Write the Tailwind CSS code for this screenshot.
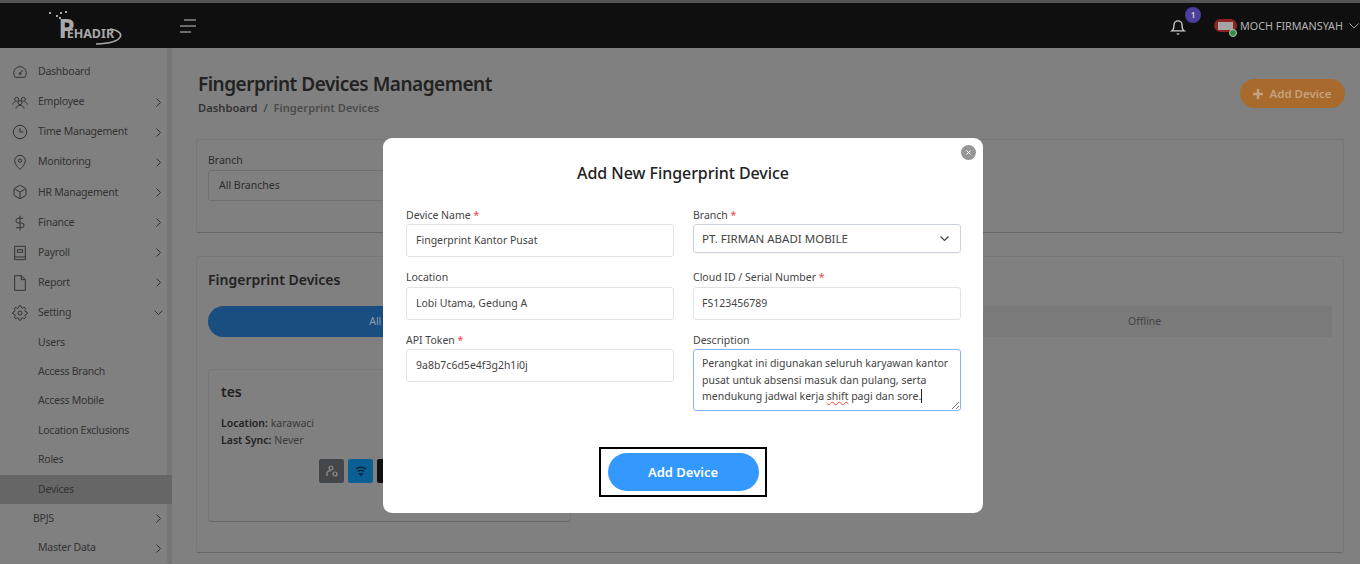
<!DOCTYPE html>
<html lang="en">
<head>
    <meta charset="UTF-8">
    <meta name="viewport" content="width=device-width, initial-scale=1.0">
    <title>Fingerprint Devices Management</title>
    <script src="https://cdn.jsdelivr.net/npm/@tailwindcss/browser@4"></script>
</head>
<body class="relative w-[1360px] h-[564px] overflow-hidden bg-[#808080] font-['Noto_Sans',sans-serif] text-[#2c2c2c]">

    <!-- top bar -->
    <header class="h-[48px] border-t-[3px] border-[#555555] bg-[#0f0f0f] flex items-center">
        <div class="w-[180px] shrink-0 pl-[48px]">
            <svg width="80" height="40" viewBox="0 0 80 40" class="mt-[-1px]">
                <g fill="#a8a8a8">
                    <rect x="1" y="7" width="2" height="2"/><rect x="8" y="10" width="2" height="2"/><rect x="12" y="7" width="2" height="2"/><rect x="17" y="6" width="2" height="2"/><rect x="11" y="12" width="2" height="2"/>
                </g>
                <text x="10.500" y="33" fill="#a8a8a8" font-family="Noto Sans" font-weight="700"><tspan font-size="26">P</tspan><tspan font-size="12.500" dx="-8">EHADIR</tspan></text>
                <path d="M62 24 C 78 26, 78 38, 48 39" fill="none" stroke="#a8a8a8" stroke-width="1.600"/>
            </svg>
        </div>
        <svg width="16" height="14" viewBox="0 0 16 14" stroke="#c8c8c8" stroke-width="1.200" fill="none"><path d="M4 1h12M0 7h16M0 13h11"/></svg>
        <div class="ml-auto flex items-center">
            <div class="relative mr-[28px]">
                <svg width="16" height="17" viewBox="0 0 24 24" fill="none" stroke="#d0d0d0" stroke-width="2" class="mt-[3px]"><path d="M18 8a6 6 0 0 0-12 0c0 7-3 9-3 9h18s-3-2-3-9"/><path d="M13.700 21a2 2 0 0 1-3.400 0"/></svg>
                <span class="absolute left-[15px] top-[-9px] w-[16px] h-[16px] rounded-full bg-[#4a3f9f] text-[#c8c8c8] text-[8px] font-bold flex items-center justify-center">1</span>
            </div>
            <div class="relative w-[23px] h-[13px] rounded-full bg-[#8c2424] mr-[3px] flex items-center justify-center">
                <span class="w-[15px] h-[8px] bg-[#a5a5a5]"></span>
                <span class="absolute right-[0px] bottom-[-5px] w-[8px] h-[8px] rounded-full bg-[#2f8f4a] border border-[#bbbbbb]"></span>
            </div>
            <span class="text-[10.800px] text-[#b4b4b4] leading-none mt-[1px]">MOCH FIRMANSYAH</span>
            <svg width="10" height="6" viewBox="0 0 10 6" fill="none" stroke="#a0a0a0" stroke-width="1" class="ml-[6px] mr-[1px]"><path d="M0.500 0.500 5 5l4.500-4.500"/></svg>
        </div>
    </header>

    <div class="flex h-[516px]">
        <!-- sidebar -->
        <aside class="w-[172px] shrink-0 pt-[9px] border-r-[5px] border-[#767676] text-[10.500px] tracking-[-0.250px] text-[#333333]">
            <div class="h-[30.100px] flex items-center pl-[12px]">
                <svg class="w-[16px] h-[16px] mr-[10px]" viewBox="0 0 24 24" fill="none" stroke="#333" stroke-width="1.500"><path d="M5 20a9.500 9.500 0 1 1 14 0z"/><path d="M12 14l4-5"/><circle cx="12" cy="14.500" r="1.500"/></svg>
                Dashboard
            </div>
            <div class="h-[30.100px] flex items-center pl-[12px]">
                <svg class="w-[16px] h-[16px] mr-[10px]" viewBox="0 0 24 24" fill="none" stroke="#333" stroke-width="1.500"><circle cx="7" cy="8" r="3"/><circle cx="17" cy="8" r="3"/><circle cx="12" cy="13" r="3"/><path d="M1 16c0-3 2-4 4-4M23 16c0-3-2-4-4-4M6 22c0-3 3-5 6-5s6 2 6 5"/></svg>
                Employee
                <svg class="ml-auto mr-[6px]" width="5" height="9" viewBox="0 0 5 9" fill="none" stroke="#333" stroke-width="1"><path d="M0.500 0.500l4 4-4 4"/></svg>
            </div>
            <div class="h-[30.100px] flex items-center pl-[12px]">
                <svg class="w-[16px] h-[16px] mr-[10px]" viewBox="0 0 24 24" fill="none" stroke="#333" stroke-width="1.500"><circle cx="12" cy="12" r="10"/><path d="M12 6v6h5"/></svg>
                Time Management
                <svg class="ml-auto mr-[6px]" width="5" height="9" viewBox="0 0 5 9" fill="none" stroke="#333" stroke-width="1"><path d="M0.500 0.500l4 4-4 4"/></svg>
            </div>
            <div class="h-[30.100px] flex items-center pl-[12px]">
                <svg class="w-[16px] h-[16px] mr-[10px]" viewBox="0 0 24 24" fill="none" stroke="#333" stroke-width="1.500"><path d="M20 10c0 6-8 13-8 13s-8-7-8-13a8 8 0 0 1 16 0z"/><circle cx="12" cy="10" r="2.500"/></svg>
                Monitoring
                <svg class="ml-auto mr-[6px]" width="5" height="9" viewBox="0 0 5 9" fill="none" stroke="#333" stroke-width="1"><path d="M0.500 0.500l4 4-4 4"/></svg>
            </div>
            <div class="h-[30.100px] flex items-center pl-[12px]">
                <svg class="w-[16px] h-[16px] mr-[10px]" viewBox="0 0 24 24" fill="none" stroke="#333" stroke-width="1.500"><path d="M21 16V8a2 2 0 0 0-1-1.700l-7-4a2 2 0 0 0-2 0l-7 4A2 2 0 0 0 3 8v8a2 2 0 0 0 1 1.700l7 4a2 2 0 0 0 2 0l7-4a2 2 0 0 0 1-1.700z"/><path d="M3.300 7L12 12l8.700-5M12 22V12"/></svg>
                HR Management
                <svg class="ml-auto mr-[6px]" width="5" height="9" viewBox="0 0 5 9" fill="none" stroke="#333" stroke-width="1"><path d="M0.500 0.500l4 4-4 4"/></svg>
            </div>
            <div class="h-[30.100px] flex items-center pl-[12px]">
                <svg class="w-[16px] h-[16px] mr-[10px]" viewBox="0 0 24 24" fill="none" stroke="#333" stroke-width="1.500"><path d="M12 1v22M17 5H9.500a3.500 3.500 0 0 0 0 7h5a3.500 3.500 0 0 1 0 7H6"/></svg>
                Finance
                <svg class="ml-auto mr-[6px]" width="5" height="9" viewBox="0 0 5 9" fill="none" stroke="#333" stroke-width="1"><path d="M0.500 0.500l4 4-4 4"/></svg>
            </div>
            <div class="h-[30.100px] flex items-center pl-[12px]">
                <svg class="w-[16px] h-[16px] mr-[10px]" viewBox="0 0 24 24" fill="none" stroke="#333" stroke-width="1.500"><path d="M4 2h16v20H4z"/><path d="M4 18h16"/><path d="M8 7h8v4H8z"/></svg>
                Payroll
                <svg class="ml-auto mr-[6px]" width="5" height="9" viewBox="0 0 5 9" fill="none" stroke="#333" stroke-width="1"><path d="M0.500 0.500l4 4-4 4"/></svg>
            </div>
            <div class="h-[30.100px] flex items-center pl-[12px]">
                <svg class="w-[16px] h-[16px] mr-[10px]" viewBox="0 0 24 24" fill="none" stroke="#333" stroke-width="1.500"><path d="M14 1H4v22h16V7z"/><path d="M14 1v6h6"/></svg>
                Report
                <svg class="ml-auto mr-[6px]" width="5" height="9" viewBox="0 0 5 9" fill="none" stroke="#333" stroke-width="1"><path d="M0.500 0.500l4 4-4 4"/></svg>
            </div>
            <div class="h-[30.100px] flex items-center pl-[12px]">
                <svg class="w-[16px] h-[16px] mr-[10px]" viewBox="0 0 24 24" fill="none" stroke="#333" stroke-width="1.500"><circle cx="12" cy="12" r="3"/><path d="M19.400 15a1.650 1.650 0 0 0 .330 1.820l.060.060a2 2 0 1 1-2.830 2.830l-.060-.060a1.650 1.650 0 0 0-2.800 1.170V21a2 2 0 0 1-4 0v-.090A1.650 1.650 0 0 0 7.300 19.700l-.060.060a2 2 0 1 1-2.830-2.830l.060-.060A1.650 1.650 0 0 0 3.300 14H3a2 2 0 0 1 0-4h.090A1.650 1.650 0 0 0 4.300 7.300l-.060-.060a2 2 0 1 1 2.830-2.830l.060.060A1.650 1.650 0 0 0 10 3.300V3a2 2 0 0 1 4 0v.090a1.650 1.650 0 0 0 2.800 1.170l.060-.060a2 2 0 1 1 2.830 2.830l-.060.060A1.650 1.650 0 0 0 20.700 10H21a2 2 0 0 1 0 4h-.090a1.650 1.650 0 0 0-1.510 1z"/></svg>
                Setting
                <svg class="ml-auto mr-[4px]" width="9" height="5" viewBox="0 0 9 5" fill="none" stroke="#333" stroke-width="1"><path d="M0.500 0.500l4 4 4-4"/></svg>
            </div>
            <div class="h-[29.400px] flex items-center pl-[38px]">Users</div>
            <div class="h-[29.400px] flex items-center pl-[38px]">Access Branch</div>
            <div class="h-[29.400px] flex items-center pl-[38px]">Access Mobile</div>
            <div class="h-[29.400px] flex items-center pl-[38px]">Location Exclusions</div>
            <div class="h-[29.400px] flex items-center pl-[38px]">Roles</div>
            <div class="h-[29.400px] flex items-center pl-[38px] bg-[#666666] w-[172px]">Devices</div>
            <div class="h-[29.400px] flex items-center pl-[33px]">
                BPJS
                <svg class="ml-auto mr-[6px]" width="5" height="9" viewBox="0 0 5 9" fill="none" stroke="#333" stroke-width="1"><path d="M0.500 0.500l4 4-4 4"/></svg>
            </div>
            <div class="h-[29.400px] flex items-center pl-[38px]">
                Master Data
                <svg class="ml-auto mr-[6px]" width="5" height="9" viewBox="0 0 5 9" fill="none" stroke="#333" stroke-width="1"><path d="M0.500 0.500l4 4-4 4"/></svg>
            </div>
        </aside>

        <!-- main content -->
        <main class="flex-1 pl-[24px] pr-[16px] pt-[23px]">
            <div class="flex items-start justify-between h-[68px]">
                <div class="pl-[2px]">
                    <h1 class="text-[19px] tracking-[-0.500px] leading-[26px] font-semibold text-[#222222]">Fingerprint Devices Management</h1>
                    <p class="text-[11.200px] leading-[22px] font-semibold mt-[0px] text-[#333333]">Dashboard <span class="font-normal mx-[3px]">/</span> <span class="text-[#4a4a4a]">Fingerprint Devices</span></p>
                </div>
                <button class="mt-[8px] mr-[-1px] w-[105px] h-[29px] rounded-full bg-[#a96a2e] text-[#c4a27f] text-[11.500px] font-semibold flex items-center justify-center gap-[6px]">
                    <svg width="10" height="10" viewBox="0 0 10 10" stroke="#c4a27f" stroke-width="2.500"><path d="M5 0v10M0 5h10"/></svg>
                    Add Device
                </button>
            </div>

            <section class="h-[94px] border border-[#777777] border-b-[#666666] rounded-[3px] px-[11px] pt-[13px] text-[10.500px]">
                <div class="leading-[14px] text-[#2c2c2c]">Branch</div>
                <div class="mt-[3px] w-[360px] h-[31px] border border-[#707070] rounded-[3px] flex items-center pl-[10px] text-[#2c2c2c]">All Branches</div>
            </section>

            <section class="mt-[23px] h-[297px] border border-[#777777] border-b-[#666666] rounded-[3px] px-[11px] pt-[11px]">
                <h2 class="text-[14px] leading-[24px] font-semibold text-[#222222]">Fingerprint Devices</h2>
                <div class="mt-[14px] w-[1124px] h-[31px] grid grid-cols-3 bg-[#7a7a7a] rounded-[2px] rounded-l-full text-[10.500px] text-[#444444]">
                    <div class="bg-[#1a4d80] rounded-full flex items-center justify-center text-[#8f9fb0]">All Devices</div>
                    <div class="flex items-center justify-center">Online</div>
                    <div class="flex items-center justify-center">Offline</div>
                </div>
                <div class="mt-[32px] w-[363px] h-[153px] border border-[#777777] border-b-[#666666] rounded-[3px] pl-[12px] pt-[11px]">
                    <h3 class="text-[14px] leading-[22px] font-semibold text-[#222222]">tes</h3>
                    <p class="mt-[12px] text-[10.500px] leading-[17px] text-[#3a3a3a]"><b class="font-semibold text-[#222222]">Location:</b> karawaci</p>
                    <p class="text-[10.500px] leading-[17px] text-[#3a3a3a]"><b class="font-semibold text-[#222222]">Last Sync:</b> Never</p>
                    <div class="mt-[10px] ml-[98px] flex gap-[4px]">
                        <span class="w-[25px] h-[24px] rounded-[2px] bg-[#43464b] flex items-center justify-center">
                            <svg width="12" height="12" viewBox="0 0 12 12" fill="none" stroke="#909090" stroke-width="1.200"><circle cx="5" cy="3" r="2"/><path d="M1 11V8a3 3 0 0 1 4-2"/><circle cx="9" cy="9" r="2"/></svg>
                        </span>
                        <span class="w-[25px] h-[24px] rounded-[2px] bg-[#0a5f94] flex items-center justify-center">
                            <svg width="12" height="10" viewBox="0 0 12 10" fill="none" stroke="#0b1e2c" stroke-width="1.400"><path d="M1 3a8 8 0 0 1 10 0M3 5.500a5 5 0 0 1 6 0M6 9l-1-1h2z"/></svg>
                        </span>
                        <span class="w-[25px] h-[24px] rounded-[2px] bg-[#111111]"></span>
                    </div>
                </div>
            </section>
        </main>
    </div>

    <!-- add device modal -->
    <div class="absolute left-[383px] top-[138px] w-[600px] h-[375px] rounded-[9px] bg-white px-[23px] pt-[22px] text-[#333333]">
        <button class="absolute right-[7px] top-[7px] w-[15px] h-[15px] rounded-full bg-[#969696] flex items-center justify-center">
            <svg width="5" height="5" viewBox="0 0 5 5" stroke="#ffffff" stroke-width="1"><path d="M0.500 0.500l4 4M4.500 0.500l-4 4"/></svg>
        </button>
        <h2 class="text-center text-[16px] tracking-[-0.050px] leading-[26px] font-medium text-[#222222]">Add New Fingerprint Device</h2>

        <div class="mt-[22px] grid grid-cols-[268px_268px] gap-x-[19px] text-[10.500px]">
            <div>
                <label class="block leading-[14px] text-[#444444]">Device Name <span class="text-[#ef4444]">*</span></label>
                <div class="mt-[2px] h-[33px] border border-[#e3e3e3] rounded-[3px] flex items-center pl-[9px] text-[#444444]">Fingerprint Kantor Pusat</div>
            </div>
            <div>
                <label class="block leading-[14px] text-[#444444]">Branch <span class="text-[#ef4444]">*</span></label>
                <div class="mt-[2px] h-[29px] border border-[#cdd3dc] rounded-[3px] shadow-[0_1px_1px_rgba(0,0,0,0.05)] flex items-center pl-[8px] pr-[11px] text-[#444444] text-[11.500px]">
                    PT. FIRMAN ABADI MOBILE
                    <svg class="ml-auto" width="9" height="6" viewBox="0 0 9 6" fill="none" stroke="#444" stroke-width="1.200"><path d="M0.500 0.500l4 4 4-4"/></svg>
                </div>
            </div>

            <div class="mt-[13px]">
                <label class="block leading-[14px] text-[#444444]">Location</label>
                <div class="mt-[3px] h-[33px] border border-[#e3e3e3] rounded-[3px] flex items-center pl-[9px] text-[#444444]">Lobi Utama, Gedung A</div>
            </div>
            <div class="mt-[13px]">
                <label class="block leading-[14px] text-[#444444]">Cloud ID / Serial Number <span class="text-[#ef4444]">*</span></label>
                <div class="mt-[3px] h-[33px] border border-[#e3e3e3] rounded-[3px] flex items-center pl-[8px] text-[#444444]">FS123456789</div>
            </div>

            <div class="mt-[13px]">
                <label class="block leading-[14px] text-[#444444]">API Token <span class="text-[#ef4444]">*</span></label>
                <div class="mt-[2px] h-[33px] border border-[#e3e3e3] rounded-[3px] flex items-center pl-[9px] text-[#444444]">9a8b7c6d5e4f3g2h1i0j</div>
            </div>
            <div class="mt-[13px]">
                <label class="block leading-[14px] text-[#444444]">Description</label>
                <div class="relative mt-[2px] h-[62px] border border-[#86b7fe] rounded-[3px] pl-[8px] pt-[5px] leading-[16.500px] text-[#444444]">
                    Perangkat ini digunakan seluruh karyawan kantor<br>pusat untuk absensi masuk dan pulang, serta<br>mendukung jadwal kerja <span class="underline decoration-wavy decoration-[#ef4444] decoration-1">shift</span> pagi dan sore.<span class="border-r border-[#222222]"></span>
                    <svg class="absolute right-[1px] bottom-[1px]" width="8" height="8" viewBox="0 0 8 8" stroke="#555" stroke-width="0.800"><path d="M1 8l7-7M5 8l3-3"/></svg>
                </div>
            </div>
        </div>

        <div class="absolute left-[216px] top-[309px] w-[168px] h-[50px] border-2 border-black flex items-center justify-center">
            <button class="w-[151px] h-[38px] rounded-full bg-[#3399ff] text-white text-[13px] font-semibold pt-[1px]">Add Device</button>
        </div>
    </div>

</body>
</html>
